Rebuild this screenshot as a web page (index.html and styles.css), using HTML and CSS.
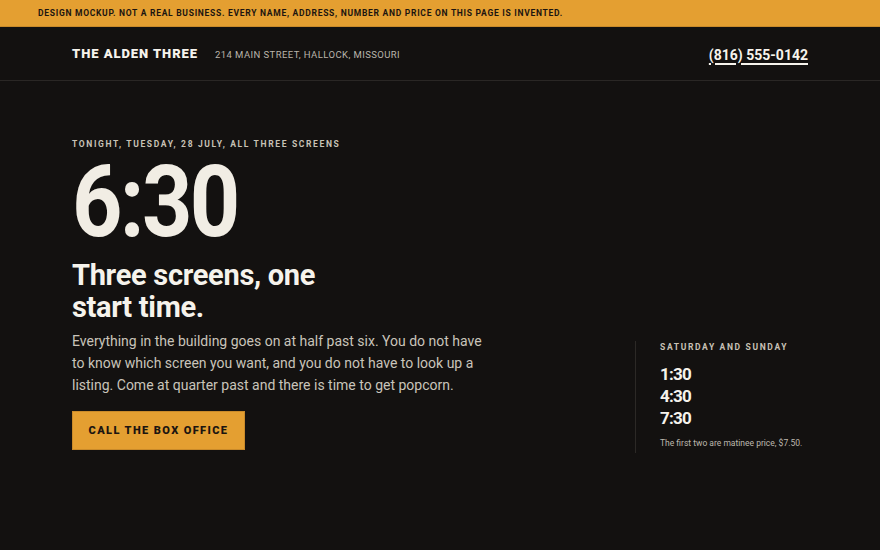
FILE: index.html
```html
<!DOCTYPE html>
<html lang="en">
<head>
<meta charset="utf-8">
<title>The Alden Three</title>
<link rel="stylesheet" href="styles.css">
</head>
<body>
<div class="notice">Design mockup. Not a real business. Every name, address, number and price on this page is invented.</div>
<header class="site-header">
  <div class="brand">
    <span class="brand-name">The Alden Three</span>
    <span class="brand-address">214 Main Street, Hallock, Missouri</span>
  </div>
  <a class="phone" href="#">(816) 555-0142</a>
</header>
<main class="hero">
  <section class="tonight">
    <p class="eyebrow">Tonight, Tuesday, 28 July, all three screens</p>
    <h1 class="big-time"><span class="big-digits">6:30</span></h1>
    <h2 class="headline">Three screens, one<br>start time.</h2>
    <p class="lede">Everything in the building goes on at half past six. You do not have to know which screen you want, and you do not have to look up a listing. Come at quarter past and there is time to get popcorn.</p>
    <a class="cta" href="#">Call the box office</a>
  </section>
  <aside class="weekend">
    <p class="eyebrow">Saturday and Sunday</p>
    <ul class="times">
      <li>1:30</li>
      <li>4:30</li>
      <li>7:30</li>
    </ul>
    <p class="note">The first two are matinee price, $7.50.</p>
  </aside>
</main>
</body>
</html>
```
FILE: styles.css
```css
* { box-sizing: border-box; }
html, body { margin: 0; padding: 0; }
body {
  background: #131110;
  color: #f2efe8;
  font-family: "Roboto", "Liberation Sans", sans-serif;
  height: 550px;
  overflow: hidden;
}
.notice {
  background: #e49f31;
  color: #1c1510;
  height: 27px;
  padding: 0 38px;
  font-size: 8.5px;
  font-weight: 700;
  letter-spacing: 0.72px;
  text-transform: uppercase;
  display: flex;
  align-items: center;
  border-bottom: 1px solid #c98a2a;
}
.site-header {
  height: 54px;
  padding: 0 72px;
  display: flex;
  align-items: center;
  justify-content: space-between;
  border-bottom: 1px solid #2a2725;
}
.brand { display: flex; align-items: baseline; gap: 17px; }
.brand-name {
  font-size: 13px;
  font-weight: 900;
  letter-spacing: 0.95px;
  text-transform: uppercase;
  color: #f6f3ec;
}
.brand-address {
  font-size: 9.5px;
  letter-spacing: 0.42px;
  text-transform: uppercase;
  color: #b9b4ab;
}
.phone {
  color: #f6f3ec;
  font-size: 14px;
  font-weight: 700;
  text-decoration: underline;
  text-underline-offset: 3px;
  text-decoration-thickness: 1.5px;
  margin-top: 2px;
}
.hero {
  display: flex;
  justify-content: space-between;
  align-items: flex-end;
  padding: 58px 72px 0 72px;
}
.tonight { width: 420px; }
.eyebrow {
  margin: 0;
  font-size: 8.5px;
  line-height: 10px;
  font-weight: 700;
  letter-spacing: 1.65px;
  text-transform: uppercase;
  color: #c8c2b6;
}
.big-time {
  margin: 13px 0 0 0;
  font-size: 100px;
  font-weight: 700;
  line-height: 80px;
  height: 80px;
  color: #f1ede4;
}
.big-digits {
  display: inline-block;
  letter-spacing: -3px;
  transform: scaleX(0.88);
  transform-origin: left center;
}
.headline {
  margin: 17px 0 0 0;
  font-size: 29px;
  font-weight: 700;
  line-height: 32px;
  letter-spacing: -0.3px;
  color: #f6f3ec;
}
.lede {
  margin: 7px 0 0 0;
  width: 410px;
  font-size: 14px;
  line-height: 22px;
  color: #c9c4ba;
}
.cta {
  display: block;
  margin-top: 15px;
  width: 173px;
  height: 39px;
  line-height: 37px;
  text-align: center;
  background: #e49f31;
  border: 1px solid #c98a2a;
  color: #1c1510;
  font-size: 11px;
  font-weight: 900;
  letter-spacing: 1.4px;
  text-transform: uppercase;
  text-decoration: none;
}
.weekend {
  width: 173px;
  margin-bottom: -3px;
  padding: 1px 0 4px 24px;
  border-left: 1px solid #2c2926;
}
.times {
  list-style: none;
  margin: 11px 0 0 0;
  padding: 0;
  font-size: 17px;
  font-weight: 700;
  line-height: 22px;
  letter-spacing: -0.8px;
  color: #f6f3ec;
}
.note {
  margin: 9px 0 0 0;
  font-size: 8.5px;
  line-height: 11px;
  color: #bdb8ae;
}
```
